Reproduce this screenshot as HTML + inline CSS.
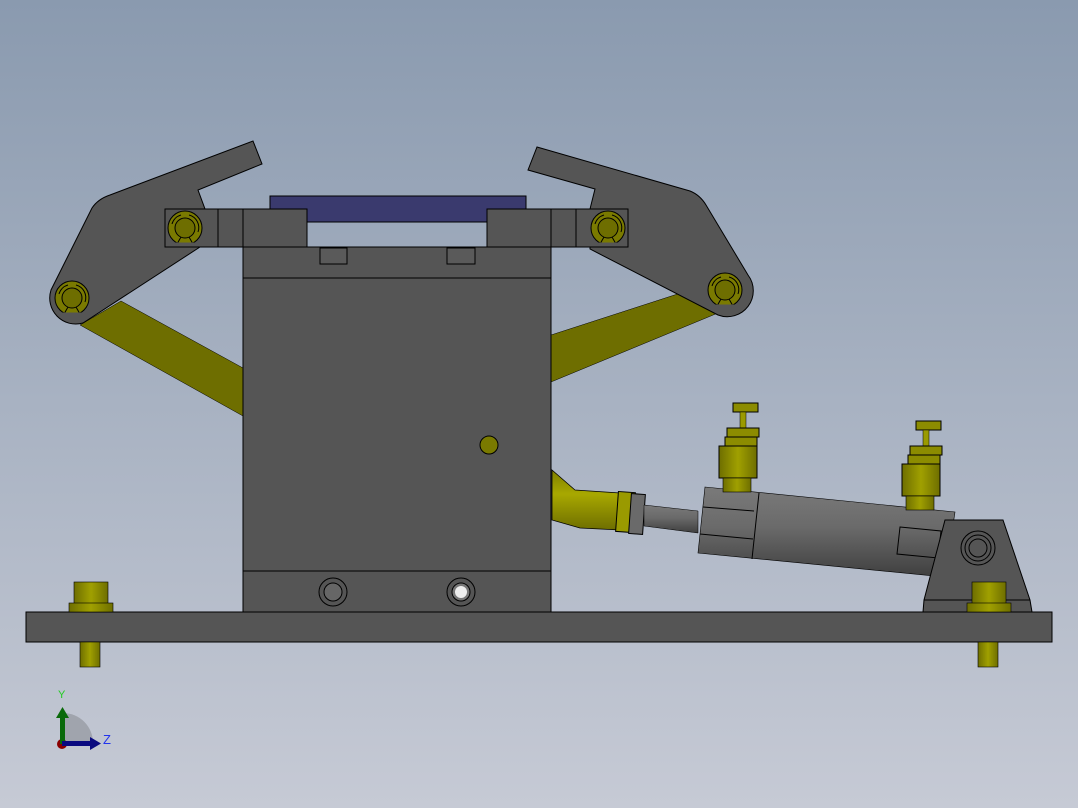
<!DOCTYPE html>
<html><head><meta charset="utf-8"><style>
html,body{margin:0;padding:0;width:1078px;height:808px;overflow:hidden}
svg{display:block}
</style></head><body>
<svg width="1078" height="808" viewBox="0 0 1078 808" xmlns="http://www.w3.org/2000/svg">
<defs>
<linearGradient id="bg" x1="0" y1="0" x2="0" y2="1"><stop offset="0" stop-color="#8a9aaf"/><stop offset="1" stop-color="#c6cad5"/></linearGradient>
<linearGradient id="cyl" x1="0" y1="0" x2="0" y2="1"><stop offset="0" stop-color="#7a7a7a"/><stop offset="0.45" stop-color="#6a6a6a"/><stop offset="1" stop-color="#3f3f3f"/></linearGradient>
<linearGradient id="yl" x1="0" y1="0" x2="1" y2="0"><stop offset="0" stop-color="#6e6e00"/><stop offset="0.5" stop-color="#a0a000"/><stop offset="1" stop-color="#6e6e00"/></linearGradient>
<linearGradient id="yl2" x1="0" y1="0" x2="0" y2="1"><stop offset="0" stop-color="#7e7e00"/><stop offset="0.4" stop-color="#a8a800"/><stop offset="1" stop-color="#6e6e00"/></linearGradient>
<g id="clip">
<circle r="17" fill="#7a7a00" stroke="#000" stroke-width="1"/>
<circle r="10" fill="#6e6e00" stroke="#000" stroke-width="1"/>
<path d="M -13 -4 A 13 13 0 0 1 -4 -13" fill="none" stroke="#000" stroke-width="1"/>
<path d="M 4 -13 A 13 13 0 0 1 13 4" fill="none" stroke="#000" stroke-width="1"/>
<path d="M -8 16 L -4 9 M 8 16 L 4 9" stroke="#000" stroke-width="1"/>
<path d="M -10 16 L 10 16" stroke="#555" stroke-width="3"/>
</g>
<g id="valve">
<rect x="733" y="403" width="25" height="9" fill="#8c8c00" stroke="#000"/>
<rect x="740" y="412" width="6" height="16" fill="#9a9a00" stroke="#000" stroke-width="0.5"/>
<rect x="727" y="428" width="32" height="9" fill="#8c8c00" stroke="#000"/>
<rect x="725" y="437" width="32" height="9" fill="#8c8c00" stroke="#000"/>
<rect x="719" y="446" width="38" height="32" fill="url(#yl)" stroke="#000"/>
<rect x="723" y="478" width="28" height="14" fill="url(#yl)" stroke="#000" stroke-width="0.6"/>
</g>
</defs>
<rect width="1078" height="808" fill="url(#bg)"/>

<polygon points="80,325 121,301 243,368 243,416" fill="#6e6e00" stroke="#000" stroke-width="0.5"/>
<polygon points="551,335 690,290 718,313 551,382" fill="#6e6e00" stroke="#000" stroke-width="0.5"/>

<path d="M 253 141 L 262 164 L 198 190 L 205 209 L 205 247 L 200 247 L 83 323 A 26 26 0 0 1 51 290 L 92 208 Q 98 199 110 195 Z" fill="#555" stroke="#000" stroke-width="1"/>
<path d="M 537 147 L 690 191 Q 700 195 706 205 L 748 275 A 26 26 0 0 1 718 315 L 590 249 L 590 209 L 595 189 L 528 170 Z" fill="#555" stroke="#000" stroke-width="1"/>
<use href="#clip" x="72" y="298"/>
<use href="#clip" x="725" y="290"/>

<rect x="270" y="196" width="256" height="26" fill="#3a3a6e" stroke="#000"/>
<rect x="165" y="209" width="78" height="38" fill="#555" stroke="#000"/>
<line x1="218" y1="209" x2="218" y2="247" stroke="#000"/>
<rect x="551" y="209" width="77" height="38" fill="#555" stroke="#000"/>
<line x1="576" y1="209" x2="576" y2="247" stroke="#000"/>
<use href="#clip" x="185" y="228"/>
<use href="#clip" x="608" y="228"/>
<rect x="243" y="209" width="64" height="38" fill="#555" stroke="#000"/>
<rect x="487" y="209" width="64" height="38" fill="#555" stroke="#000"/>

<rect x="243" y="247" width="308" height="365" fill="#555" stroke="#000"/>
<line x1="243" y1="278" x2="551" y2="278" stroke="#000"/>
<line x1="243" y1="571" x2="551" y2="571" stroke="#000"/>
<rect x="320" y="248" width="27" height="16" fill="#5a5a5a" stroke="#000"/>
<rect x="447" y="248" width="28" height="16" fill="#5a5a5a" stroke="#000"/>
<circle cx="489" cy="445" r="9" fill="#7a7a00" stroke="#000"/>
<circle cx="333" cy="592" r="14" fill="#555" stroke="#000"/>
<circle cx="333" cy="592" r="9" fill="#666" stroke="#000"/>
<circle cx="461" cy="592" r="14" fill="#555" stroke="#000"/>
<circle cx="461" cy="592" r="9" fill="#777" stroke="#000"/>
<circle cx="461" cy="592" r="6" fill="#eee"/>

<path d="M 552 470 L 575 490 L 620 493 L 620 530 L 580 528 L 552 520 Z" fill="url(#yl2)" stroke="#000" stroke-width="0.8"/>
<rect x="617" y="492" width="17" height="40" fill="#9a9a00" stroke="#000" transform="rotate(4 625 512)"/>
<rect x="630" y="494" width="14" height="40" fill="#6a6a6a" stroke="#000" transform="rotate(4 637 514)"/>
<polygon points="644,505 698,511 698,533 644,526" fill="url(#cyl)" stroke="#000" stroke-width="0.5"/>
<polygon points="705,487 955,512 945,577 698,553" fill="url(#cyl)" stroke="#000" stroke-width="0.6"/>
<line x1="759" y1="493" x2="752" y2="559" stroke="#000"/>
<line x1="703" y1="507" x2="754" y2="511" stroke="#000"/>
<line x1="700" y1="534" x2="753" y2="539" stroke="#000"/>
<polygon points="900,527 941,531 938,558 897,554" fill="none" stroke="#000"/>
<use href="#valve"/>
<use href="#valve" x="183" y="18"/>
<polygon points="945,520 1003,520 1030,600 1032,612 923,612 924,600" fill="#555" stroke="#000"/>
<line x1="924" y1="600" x2="1030" y2="600" stroke="#000"/>
<circle cx="978" cy="548" r="17" fill="none" stroke="#000"/>
<circle cx="978" cy="548" r="13" fill="none" stroke="#000"/>
<circle cx="978" cy="548" r="9" fill="none" stroke="#000"/>

<rect x="26" y="612" width="1026" height="30" fill="#555" stroke="#000"/>
<rect x="74" y="582" width="34" height="22" fill="url(#yl)" stroke="#000" stroke-width="0.6"/>
<rect x="69" y="603" width="44" height="9" fill="url(#yl)" stroke="#000" stroke-width="0.6"/>
<rect x="80" y="642" width="20" height="25" fill="url(#yl)" stroke="#000" stroke-width="0.6"/>
<rect x="972" y="582" width="34" height="22" fill="url(#yl)" stroke="#000" stroke-width="0.6"/>
<rect x="967" y="603" width="44" height="9" fill="url(#yl)" stroke="#000" stroke-width="0.6"/>
<rect x="978" y="642" width="20" height="25" fill="url(#yl)" stroke="#000" stroke-width="0.6"/>

<path d="M 63 713 A 30 30 0 0 1 93 743 L 63 743 Z" fill="#a0a4ad"/>
<circle cx="62" cy="744" r="5" fill="#8a0000"/>
<rect x="60" y="716" width="5" height="28" fill="#0a6a0a"/>
<polygon points="56,718 62.5,707 69,718" fill="#0a6a0a"/>
<rect x="62" y="741" width="30" height="5" fill="#0a0a80"/>
<polygon points="90,737 101,743.5 90,750" fill="#0a0a80"/>
<text x="58" y="698" font-family="Liberation Sans, sans-serif" font-size="11" fill="#22cc22">Y</text>
<text x="103" y="744" font-family="Liberation Sans, sans-serif" font-size="13" fill="#2233ee">Z</text>
</svg>
</body></html>
